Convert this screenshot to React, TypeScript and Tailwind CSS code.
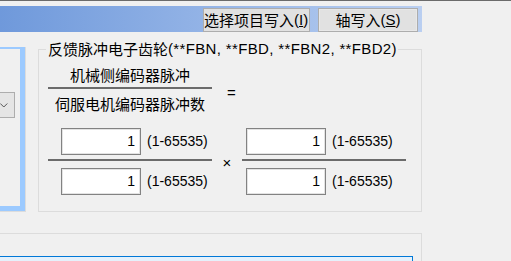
import React from 'react'

const cjk = { fontFamily: '"Noto Sans CJK SC", sans-serif' }
const latin = { fontFamily: '"Liberation Sans", "Noto Sans CJK SC", sans-serif' }

function NumBox({ value }: { value: string }) {
  return (
    <div
      className="flex h-[27px] w-[80px] items-center justify-end border border-[#828282] bg-white pr-[5px] text-[14px] shadow-[inset_1px_1px_0_#e3e3e3,inset_-1px_-1px_0_#e3e3e3]"
      style={latin}
    >
      {value}
    </div>
  )
}

function Field({ pad }: { pad: string }) {
  return (
    <div className={`flex h-[27px] items-center ${pad}`}>
      <NumBox value="1" />
      <span className="ml-[6px] text-[14px]" style={latin}>
        (1-65535)
      </span>
    </div>
  )
}

function Ratio({ pad }: { pad: string }) {
  return (
    <div className="flex w-[164px] flex-col">
      <Field pad={pad} />
      <div className="mt-[4px] h-[2px] w-full bg-[#6b6b6b]" />
      <div className="mt-[7px]">
        <Field pad={pad} />
      </div>
    </div>
  )
}

export default function App() {
  return (
    <div className="flex h-[261px] w-[511px] flex-col overflow-hidden bg-[#f0f0f0] text-black">
      <div className="h-px w-full bg-[#6b6b6b]" />
      <div className="h-[5px]" />

      {/* toolbar strip */}
      <div className="flex h-[26px] w-[422px] items-end bg-gradient-to-r from-[#6f99db] to-[#bacff1] pl-[203px]">
        <div className="flex h-[24px] w-[107px] items-center overflow-hidden whitespace-nowrap border border-[#adadad] bg-[#e1e1e1] text-[15px]">
          <span style={cjk}>选择项目写入</span>
          <span style={latin}>
            (<span className="underline">I</span>)
          </span>
        </div>
        <div className="ml-[8px] flex h-[24px] w-[100px] items-center justify-center whitespace-nowrap border border-[#adadad] bg-[#e1e1e1] text-[15px] shadow-[inset_0_0_0_1px_#e8e8e8]">
          <span style={cjk}>轴写入</span>
          <span style={latin}>
            (<span className="underline">S</span>)
          </span>
        </div>
      </div>

      <div className="flex h-[201px]">
        {/* left panel */}
        <div className="mt-[15px] h-[165px] w-[26px] border-r border-b border-[#dcdcdc]">
          <div className="h-[164px] w-[25px] border-t-2 border-r-[5px] border-b-[5px] border-[#9ccaff] pt-[43px]">
            <div className="flex h-[26px] w-[15px] items-center border-y border-r border-[#adadad] bg-[#e5e5e5] pb-[2px]">
              <svg width="8" height="5" viewBox="0 0 8 5" className="mt-[2px]">
                <path d="M0.3 0.5 L3.8 4 L7.3 0.5" fill="none" stroke="#555" strokeWidth="1" />
              </svg>
            </div>
          </div>
        </div>

        {/* gear ratio group */}
        <div className="relative ml-[12px] mt-[17px] h-[163px] w-[384px] border border-[#dcdcdc] pl-[9px] pt-[15px]">
          <div className="absolute top-[-10px] left-[7px] flex h-[18px] items-center bg-[#f0f0f0] pr-[1px] pl-[2px] leading-[18px] whitespace-nowrap">
            <span className="text-[15px]" style={cjk}>
              反馈脉冲电子齿轮
            </span>
            <span className="text-[15px] tracking-[0.35px]" style={latin}>
              (**FBN, **FBD, **FBN2, **FBD2)
            </span>
          </div>

          <div className="flex items-start">
            <div className="flex w-[164px] flex-col items-center text-[15px]" style={cjk}>
              <div className="h-[20px] leading-[20px]">机械侧编码器脉冲</div>
              <div className="mt-[2px] h-[2px] w-full bg-[#6b6b6b]" />
              <div className="mt-[5px] h-[20px] leading-[20px]">伺服电机编码器脉冲数</div>
            </div>
            <div className="mt-[18px] ml-[15px] h-[20px] text-[15px] leading-[20px]" style={latin}>
              =
            </div>
          </div>

          <div className="mt-[14px] flex items-start">
            <Ratio pad="pl-[13px]" />
            <div className="mt-[25px] h-[20px] w-[30px] text-center text-[15px] leading-[20px]" style={latin}>
              ×
            </div>
            <Ratio pad="pl-[4px]" />
          </div>
        </div>
      </div>

      {/* lower group */}
      <div className="h-[28px] w-[422px] border-t border-r border-[#dcdcdc] pt-[22px]">
        <div className="h-[10px] w-[413px] border-t border-r border-[#0078d7] bg-[#e5f1fb]" />
      </div>
    </div>
  )
}
